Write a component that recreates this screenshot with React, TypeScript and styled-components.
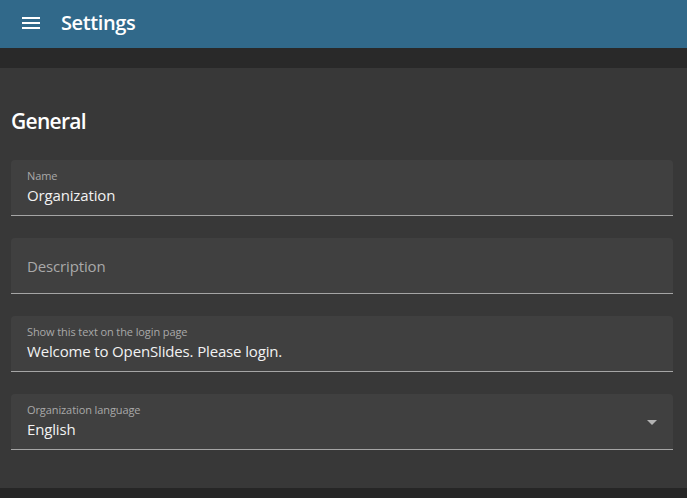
import React from 'react';
import styled, { createGlobalStyle } from 'styled-components';

const GlobalStyle = createGlobalStyle`
    html, body {
        margin: 0;
        padding: 0;
        background: #262626;
        font-family: "Open Sans", "Noto Sans", sans-serif;
    }
`;

interface IField {
    label: string;
    value?: string;
    select?: boolean;
}

const fields: IField[] = [
    { label: 'Name', value: 'Organization' },
    { label: 'Description' },
    { label: 'Show this text on the login page', value: 'Welcome to OpenSlides. Please login.' },
    { label: 'Organization language', value: 'English', select: true },
];

const App = () => {
    return (
        <>
            <GlobalStyle />
            <Page>
                <Toolbar>
                    <MenuButton aria-label="menu">
                        <svg width="24" height="24" viewBox="0 0 24 24">
                            <path d="M3 18h18v-2H3v2zm0-5h18v-2H3v2zm0-7v2h18V6H3z" fill="#fff" />
                        </svg>
                    </MenuButton>
                    <Title>Settings</Title>
                </Toolbar>
                <Content>
                    <Card>
                        <Heading>General</Heading>
                        <FieldList>
                            {fields.map(field => (
                                <Field key={field.label}>
                                    {field.value !== undefined ? (
                                        <>
                                            <FloatLabel>{field.label}</FloatLabel>
                                            <Value>{field.value}</Value>
                                        </>
                                    ) : (
                                        <Placeholder>{field.label}</Placeholder>
                                    )}
                                    {field.select && <Arrow />}
                                </Field>
                            ))}
                        </FieldList>
                    </Card>
                </Content>
            </Page>
        </>
    )
}

export default App;

const Page = styled.div`
    width: 687px;
    height: 498px;
    display: flex;
    flex-direction: column;
    background: #262626;
    overflow: hidden;
`;
const Toolbar = styled.header`
    height: 48px;
    flex-shrink: 0;
    display: flex;
    align-items: center;
    padding: 0 19px;
    background: #31698a;
    color: #fff;
    gap: 18px;
`;
const MenuButton = styled.div`
    width: 24px;
    height: 24px;
    display: flex;
    margin-top: -2px;
`;
const Title = styled.h1`
    margin: -3px 0 0;
    font-size: 20px;
    font-weight: 600;
    letter-spacing: -0.4px;
`;
const Content = styled.main`
    background: #292929;
    padding-top: 20px;
`;
const Card = styled.section`
    background: #383838;
    padding: 38px 14px 16px 11px;
    height: 420px;
    box-sizing: border-box;
`;
const Heading = styled.h2`
    margin: 0 0 24px;
    font-size: 21px;
    line-height: 30px;
    font-weight: 600;
    color: #fff;
    letter-spacing: -0.7px;
`;
const FieldList = styled.div`
    display: flex;
    flex-direction: column;
    gap: 22px;
`;
const Field = styled.div`
    position: relative;
    height: 55px;
    background: #404040;
    border-bottom: 1px solid #a5a5a5;
    border-radius: 4px 4px 0 0;
    padding: 0 16px;
    display: flex;
    flex-direction: column;
    justify-content: center;
`;
const FloatLabel = styled.div`
    font-size: 11px;
    line-height: 14px;
    color: #a9a9a9;
    letter-spacing: -0.1px;
    margin-top: -1px;
`;
const Value = styled.div`
    font-size: 15px;
    line-height: 22px;
    color: #f2f2f2;
    letter-spacing: -0.15px;
    margin-top: 1px;
`;
const Placeholder = styled.div`
    font-size: 15px;
    color: #a9a9a9;
    letter-spacing: -0.15px;
    padding-top: 1px;
`;
const Arrow = styled.span`
    position: absolute;
    right: 16px;
    top: 26px;
    width: 0;
    height: 0;
    border-left: 5px solid transparent;
    border-right: 5px solid transparent;
    border-top: 5px solid #b3b3b3;
`;
